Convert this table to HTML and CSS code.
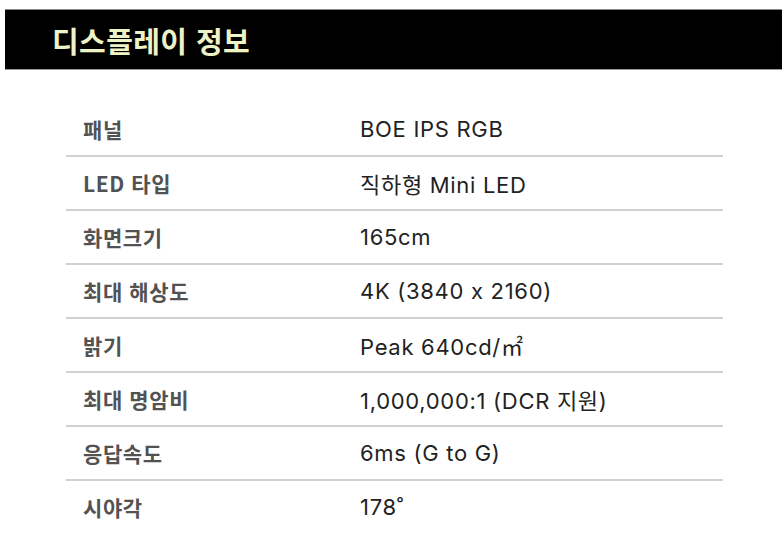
FILE: index.html
```html
<!DOCTYPE html>
<html lang="ko">
<head>
<meta charset="utf-8">
<link rel="stylesheet" href="styles.css">
</head>
<body>
<header class="banner"><h1 class="title">디스플레이 정보</h1></header>
<section class="specs">
  <div class="row"><div class="label">패널</div><div class="value">BOE IPS RGB</div></div>
  <div class="row"><div class="label">LED 타입</div><div class="value">직하형 Mini LED</div></div>
  <div class="row"><div class="label">화면크기</div><div class="value">165cm</div></div>
  <div class="row"><div class="label">최대 해상도</div><div class="value">4K (3840 x 2160)</div></div>
  <div class="row"><div class="label">밝기</div><div class="value">Peak 640cd/㎡</div></div>
  <div class="row"><div class="label">최대 명암비</div><div class="value">1,000,000:1 (DCR 지원)</div></div>
  <div class="row"><div class="label">응답속도</div><div class="value">6ms (G to G)</div></div>
  <div class="row last"><div class="label">시야각</div><div class="value">178˚</div></div>
</section>
</body>
</html>
```
FILE: styles.css
```css
html, body { margin: 0; padding: 0; background: #fff; }
body {
  padding-top: 9px;
  font-family: "Noto Sans CJK KR", "Noto Sans", sans-serif;
}
.banner {
  margin-left: 5px;
  height: 59px;
  background: #000;
  border-top: 1px solid #888;
  border-bottom: 1px solid #999;
  display: flex;
  align-items: center;
  padding-left: 47px;
}
.title {
  margin: 0;
  font-size: 29px;
  font-weight: 700;
  color: #eef3c6;
  letter-spacing: 0.4px;
}
.specs {
  margin: 33px 0 0 66px;
  width: 657px;
}
.row {
  display: flex;
  align-items: center;
  height: 52px;
  border-bottom: 2px solid #d0d0d0;
}
.row.last { border-bottom: none; }
.label {
  width: 277px;
  padding-left: 17px;
  font-size: 21px;
  font-weight: 600;
  color: #525252;
  letter-spacing: 0.6px;
}
.value {
  font-family: "Inter", "Noto Sans CJK KR", sans-serif;
  font-size: 22px;
  font-weight: 400;
  color: #222;
  letter-spacing: 0.7px;
}
```
